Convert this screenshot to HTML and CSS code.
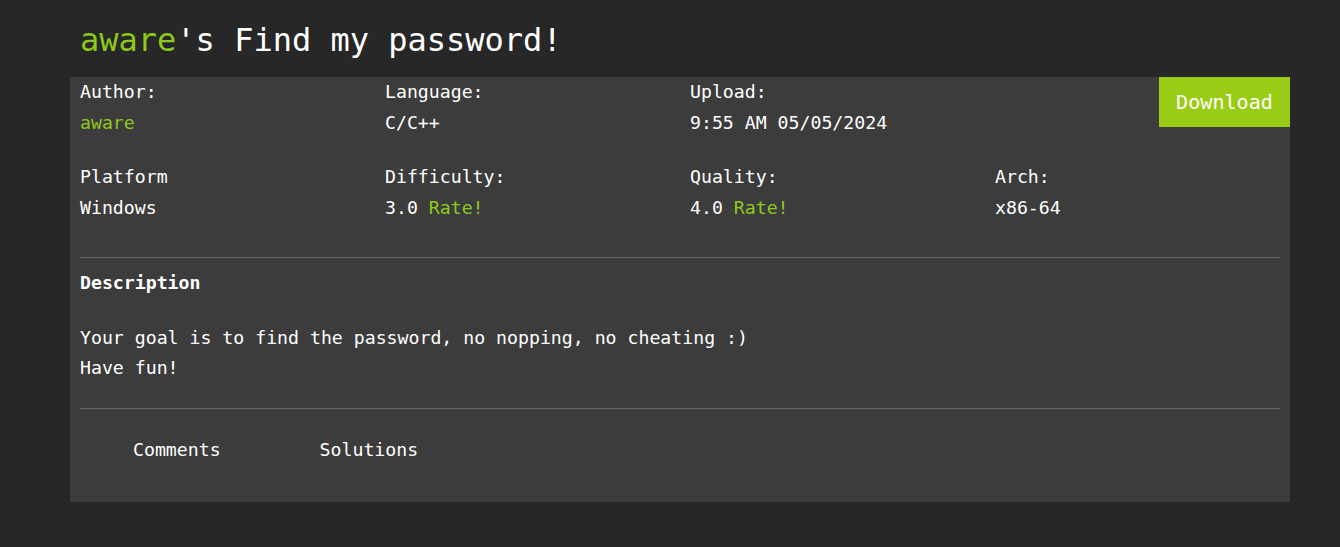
FILE: index.html
```html
<!DOCTYPE html>
<html>
<head>
<meta charset="utf-8">
<link rel="stylesheet" href="styles.css">
</head>
<body>
<h1 class="title"><span class="green">aware</span>'s Find my password!</h1>
<div class="card">
  <div class="info">
    <div class="cell"><div>Author:</div><div class="value green">aware</div></div>
    <div class="cell"><div>Language:</div><div class="value">C/C++</div></div>
    <div class="cell"><div>Upload:</div><div class="value">9:55 AM 05/05/2024</div></div>
    <a class="download">Download</a>
    <div class="cell"><div>Platform</div><div class="value">Windows</div></div>
    <div class="cell"><div>Difficulty:</div><div class="value">3.0 <span class="green">Rate!</span></div></div>
    <div class="cell"><div>Quality:</div><div class="value">4.0 <span class="green">Rate!</span></div></div>
    <div class="cell"><div>Arch:</div><div class="value">x86-64</div></div>
  </div>
  <hr class="sep sep-top">
  <div class="desc-head">Description</div>
  <div class="desc">Your goal is to find the password, no nopping, no cheating :)<br>Have fun!</div>
  <hr class="sep sep-bottom">
  <div class="tabs">
    <span class="tab">Comments</span>
    <span class="tab">Solutions</span>
  </div>
</div>
</body>
</html>
```
FILE: styles.css
```css
html, body {
  margin: 0;
  padding: 0;
  background: #272727;
}
body {
  font-family: "DejaVu Sans Mono", "Liberation Mono", monospace;
  color: #ffffff;
  font-size: 18.2px;
  line-height: 30px;
}
.green {
  color: #8cc91a;
}
.title {
  margin: 0;
  padding: 20px 80px 17px;
  font-size: 32px;
  line-height: 40px;
  font-weight: normal;
}
.card {
  margin: 0 70px;
  width: 1200px;
  background: #3c3c3c;
  padding: 0 10px 37px;
}
.info {
  display: grid;
  grid-template-columns: 305px 305px 305px 1fr;
  row-gap: 24px;
}
.value {
  margin-top: 1px;
}
.download {
  justify-self: end;
  align-self: start;
  margin-right: -10px;
  width: 131px;
  height: 50px;
  background: #9bcc15;
  color: #ffffff;
  font-size: 20.1px;
  display: flex;
  align-items: center;
  justify-content: center;
}
.sep {
  border: 0;
  height: 1px;
  background: #686868;
  margin: 0;
}
.sep-top {
  margin-top: 34px;
}
.desc-head {
  font-weight: bold;
  margin-top: 10px;
}
.desc {
  margin-top: 25px;
}
.sep-bottom {
  margin-top: 25px;
}
.tabs {
  display: flex;
  gap: 99px;
  padding-left: 53px;
  margin-top: 26px;
}
```
